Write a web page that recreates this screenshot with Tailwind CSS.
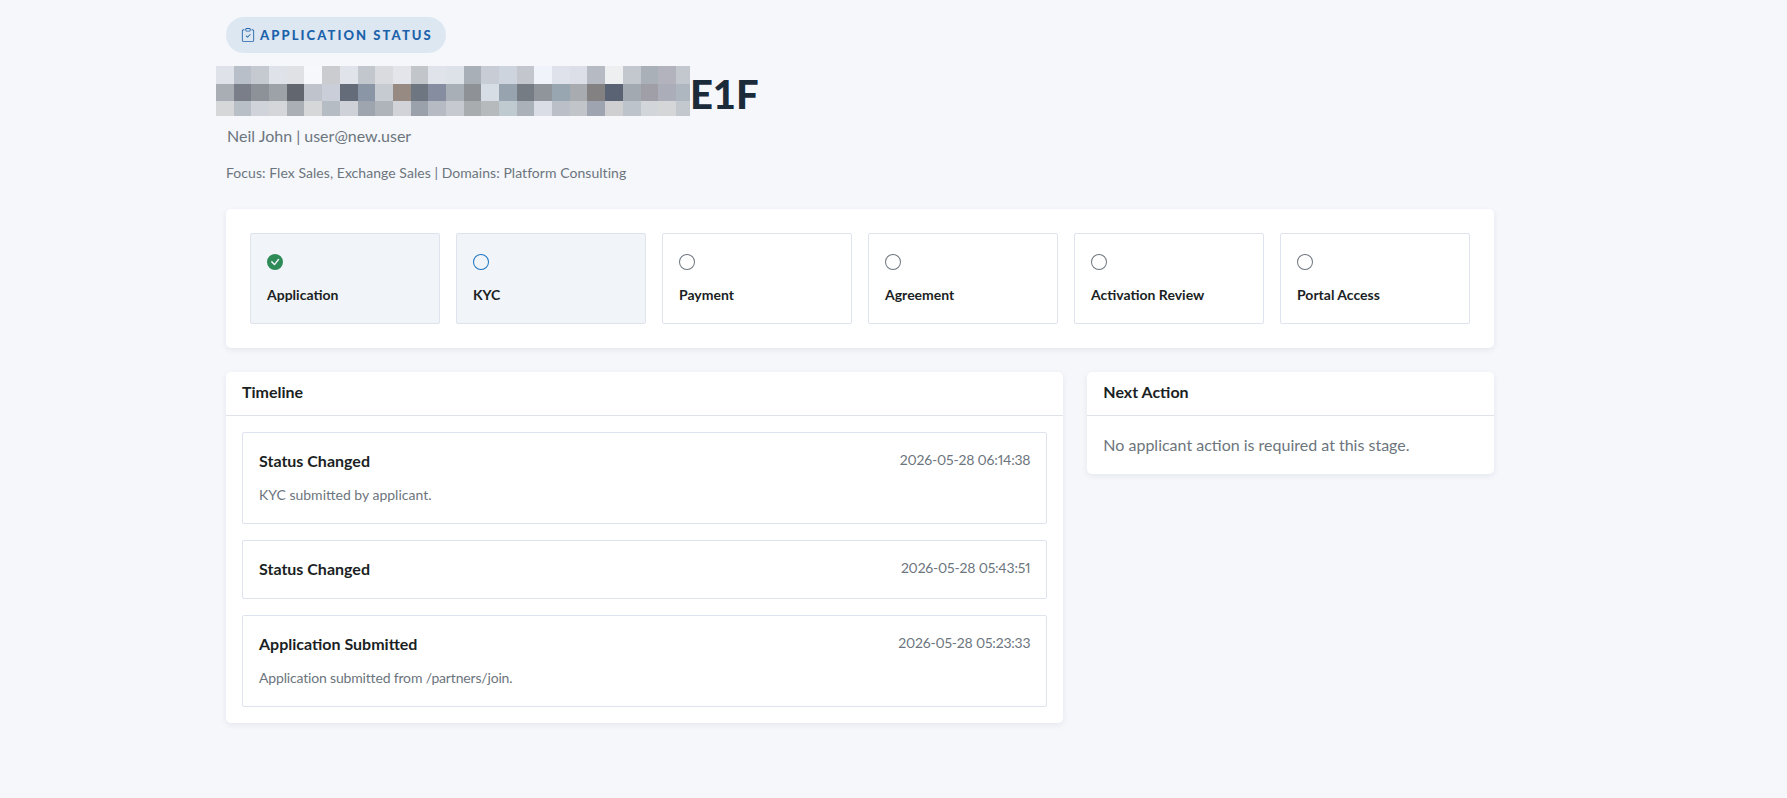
<!DOCTYPE html>
<html lang="en">
<head>
  <meta charset="UTF-8">
  <meta name="viewport" content="width=device-width, initial-scale=1.0">
  <title>Application Status</title>
  <script src="https://cdn.jsdelivr.net/npm/@tailwindcss/browser@4"></script>
</head>
<body class="bg-[#f5f7fb] font-['Lato',sans-serif] text-[#1b1f24]">
  <main class="w-[1268px] ml-[226px] pt-[17px] pb-[60px]">

    <div class="inline-flex items-center gap-[5px] h-9 pl-[15px] pr-[13px] rounded-full bg-[#dde7f2] text-[#1c62aa]">
      <svg class="w-[14px] h-[14px]" viewBox="0 0 16 16" fill="currentColor">
        <path fill-rule="evenodd" d="M10.854 7.146a.5.5 0 0 1 0 .708l-3 3a.5.5 0 0 1-.708 0l-1.5-1.5a.5.5 0 1 1 .708-.708L7.5 9.793l2.646-2.647a.5.5 0 0 1 .708 0z"/>
        <path d="M4 1.5H3a2 2 0 0 0-2 2V14a2 2 0 0 0 2 2h10a2 2 0 0 0 2-2V3.5a2 2 0 0 0-2-2h-1v1h1a1 1 0 0 1 1 1V14a1 1 0 0 1-1 1H3a1 1 0 0 1-1-1V3.5a1 1 0 0 1 1-1h1v-1z"/>
        <path d="M9.5 1a.5.5 0 0 1 .5.5v1a.5.5 0 0 1-.5.5h-3a.5.5 0 0 1-.5-.5v-1a.5.5 0 0 1 .5-.5h3zm-3-1A1.5 1.5 0 0 0 5 1.5v1A1.5 1.5 0 0 0 6.5 4h3A1.5 1.5 0 0 0 11 2.5v-1A1.5 1.5 0 0 0 9.5 0h-3z"/>
      </svg>
      <span class="text-[13px] font-black tracking-[0.16em] leading-none">APPLICATION STATUS</span>
    </div>

    <h1 class="flex h-[50px] mt-[13px] -ml-[10px] text-[40px] font-black text-[#1c2b3a]">
      <!-- blurred out part of the application id -->
      <div class="grid grid-cols-[repeat(26,17.7px)_14px] grid-rows-[18px_17px_15px] shrink-0">
        <i class="bg-[#dfe2e9]"></i><i class="bg-[#b9bfc9]"></i><i class="bg-[#c5c9d0]"></i><i class="bg-[#dfe2e8]"></i><i class="bg-[#dfe1e5]"></i><i class="bg-[#f7f8fb]"></i><i class="bg-[#cbccd0]"></i><i class="bg-[#e0e4ea]"></i><i class="bg-[#c2c7ce]"></i><i class="bg-[#d9dbde]"></i><i class="bg-[#e3e5ea]"></i><i class="bg-[#c2c5c9]"></i><i class="bg-[#e0e3ea]"></i><i class="bg-[#dde1e8]"></i><i class="bg-[#a9afb6]"></i><i class="bg-[#c7ccd5]"></i><i class="bg-[#cdd4de]"></i><i class="bg-[#c3c6cd]"></i><i class="bg-[#f1f3fa]"></i><i class="bg-[#dfe2ea]"></i><i class="bg-[#dcdfe7]"></i><i class="bg-[#b6bac2]"></i><i class="bg-[#eeeff1]"></i><i class="bg-[#c3c8cf]"></i><i class="bg-[#aab0b8]"></i><i class="bg-[#b3b3bd]"></i><i class="bg-[#c3c7ce]"></i>
        <i class="bg-[#a9aeb4]"></i><i class="bg-[#797e88]"></i><i class="bg-[#8d9299]"></i><i class="bg-[#9ca2a8]"></i><i class="bg-[#61666f]"></i><i class="bg-[#bec3cc]"></i><i class="bg-[#c9ced8]"></i><i class="bg-[#656c79]"></i><i class="bg-[#8a96a5]"></i><i class="bg-[#c5cbd0]"></i><i class="bg-[#978a82]"></i><i class="bg-[#6e7781]"></i><i class="bg-[#868da0]"></i><i class="bg-[#a8afb7]"></i><i class="bg-[#8e9196]"></i><i class="bg-[#d7dde5]"></i><i class="bg-[#97a3af]"></i><i class="bg-[#767c84]"></i><i class="bg-[#90959b]"></i><i class="bg-[#98a6b1]"></i><i class="bg-[#a8abaf]"></i><i class="bg-[#838181]"></i><i class="bg-[#5a6373]"></i><i class="bg-[#a3a9b0]"></i><i class="bg-[#a09fa8]"></i><i class="bg-[#abaeb9]"></i><i class="bg-[#aeb6c0]"></i>
        <i class="bg-[#d5d7d9]"></i><i class="bg-[#b9bfc7]"></i><i class="bg-[#d0d3d9]"></i><i class="bg-[#d4d6d9]"></i><i class="bg-[#a9afb5]"></i><i class="bg-[#d6d7d9]"></i><i class="bg-[#b5bcc3]"></i><i class="bg-[#ced1d7]"></i><i class="bg-[#9fa5ae]"></i><i class="bg-[#afb3ba]"></i><i class="bg-[#d1d3d9]"></i><i class="bg-[#9aa1aa]"></i><i class="bg-[#b6bac2]"></i><i class="bg-[#c6cad0]"></i><i class="bg-[#a9acae]"></i><i class="bg-[#b7babc]"></i><i class="bg-[#bfc9d0]"></i><i class="bg-[#aab1b9]"></i><i class="bg-[#dadde5]"></i><i class="bg-[#bbbfc7]"></i><i class="bg-[#c1c4c8]"></i><i class="bg-[#9fa5b0]"></i><i class="bg-[#cfcfd1]"></i><i class="bg-[#bcc3ca]"></i><i class="bg-[#d2d5d9]"></i><i class="bg-[#d5d6d7]"></i><i class="bg-[#c3c8ce]"></i>
      </div>
      <span class="leading-[48px] mt-[4px]">E1F</span>
    </h1>

    <p class="mt-[7px] ml-px text-base/[25.6px] text-[#6c757d]">Neil John | user@new.user</p>
    <p class="mt-[13px] text-sm/[22.4px] tracking-[0.05px] text-[#6c757d]">Focus: Flex Sales, Exchange Sales | Domains: Platform Consulting</p>

    <section class="mt-[25px] p-6 bg-white rounded-[5px] shadow-[0_2px_6px_rgba(30,40,60,0.08)] grid grid-cols-6 gap-4">
      <div class="h-[91px] pt-5 px-4 bg-[#f1f4f9] border border-[#dee3ee] rounded-[2px]">
        <svg class="w-4 h-4 text-[#2e8b57]" viewBox="0 0 16 16" fill="currentColor"><path d="M16 8A8 8 0 1 1 0 8a8 8 0 0 1 16 0zm-3.97-3.03a.75.75 0 0 0-1.08.022L7.477 9.417 5.384 7.323a.75.75 0 0 0-1.06 1.06L6.97 11.03a.75.75 0 0 0 1.079-.02l3.992-4.99a.75.75 0 0 0-.01-1.05z"/></svg>
        <p class="mt-[14px] text-sm/[22.4px] font-bold">Application</p>
      </div>
      <div class="h-[91px] pt-5 px-4 bg-[#f1f4f9] border border-[#dee3ee] rounded-[2px]">
        <svg class="w-4 h-4 text-[#1a73c0]" viewBox="0 0 16 16" fill="currentColor"><path d="M8 15A7 7 0 1 1 8 1a7 7 0 0 1 0 14zm0 1A8 8 0 1 0 8 0a8 8 0 0 0 0 16z"/></svg>
        <p class="mt-[14px] text-sm/[22.4px] font-bold">KYC</p>
      </div>
      <div class="h-[91px] pt-5 px-4 bg-white border border-[#dee3ee] rounded-[2px]">
        <svg class="w-4 h-4 text-[#6c757d]" viewBox="0 0 16 16" fill="currentColor"><path d="M8 15A7 7 0 1 1 8 1a7 7 0 0 1 0 14zm0 1A8 8 0 1 0 8 0a8 8 0 0 0 0 16z"/></svg>
        <p class="mt-[14px] text-sm/[22.4px] font-bold">Payment</p>
      </div>
      <div class="h-[91px] pt-5 px-4 bg-white border border-[#dee3ee] rounded-[2px]">
        <svg class="w-4 h-4 text-[#6c757d]" viewBox="0 0 16 16" fill="currentColor"><path d="M8 15A7 7 0 1 1 8 1a7 7 0 0 1 0 14zm0 1A8 8 0 1 0 8 0a8 8 0 0 0 0 16z"/></svg>
        <p class="mt-[14px] text-sm/[22.4px] font-bold">Agreement</p>
      </div>
      <div class="h-[91px] pt-5 px-4 bg-white border border-[#dee3ee] rounded-[2px]">
        <svg class="w-4 h-4 text-[#6c757d]" viewBox="0 0 16 16" fill="currentColor"><path d="M8 15A7 7 0 1 1 8 1a7 7 0 0 1 0 14zm0 1A8 8 0 1 0 8 0a8 8 0 0 0 0 16z"/></svg>
        <p class="mt-[14px] text-sm/[22.4px] font-bold">Activation Review</p>
      </div>
      <div class="h-[91px] pt-5 px-4 bg-white border border-[#dee3ee] rounded-[2px]">
        <svg class="w-4 h-4 text-[#6c757d]" viewBox="0 0 16 16" fill="currentColor"><path d="M8 15A7 7 0 1 1 8 1a7 7 0 0 1 0 14zm0 1A8 8 0 1 0 8 0a8 8 0 0 0 0 16z"/></svg>
        <p class="mt-[14px] text-sm/[22.4px] font-bold">Portal Access</p>
      </div>
    </section>

    <div class="mt-6 grid grid-cols-3 gap-6 items-start">
      <section class="col-span-2 bg-white rounded-[5px] shadow-[0_2px_6px_rgba(30,40,60,0.08)]">
        <h2 class="h-11 px-4 pb-[3px] flex items-center text-base font-bold border-b border-[#dfe3e8]">Timeline</h2>
        <div class="p-4 flex flex-col gap-4">
          <div class="p-4 border border-[#dee3ee] rounded-[2px]">
            <div class="flex justify-between items-start">
              <h3 class="pb-[2px] text-base/[23.6px] font-bold">Status Changed</h3>
              <span class="text-sm/[22.4px] text-[#6c757d] tracking-[-0.2px] proportional-nums">2026-05-28 06:14:38</span>
            </div>
            <p class="mt-[9.6px] text-sm/[22.4px] text-[#6c757d]">KYC submitted by applicant.</p>
          </div>
          <div class="p-4 border border-[#dee3ee] rounded-[2px]">
            <div class="flex justify-between items-start">
              <h3 class="pb-[2px] text-base/[23.6px] font-bold">Status Changed</h3>
              <span class="text-sm/[22.4px] text-[#6c757d] tracking-[-0.2px] proportional-nums">2026-05-28 05:43:51</span>
            </div>
          </div>
          <div class="p-4 border border-[#dee3ee] rounded-[2px]">
            <div class="flex justify-between items-start">
              <h3 class="pb-[2px] text-base/[23.6px] font-bold">Application Submitted</h3>
              <span class="text-sm/[22.4px] text-[#6c757d] tracking-[-0.2px] proportional-nums">2026-05-28 05:23:33</span>
            </div>
            <p class="mt-[9.6px] text-sm/[22.4px] tracking-[-0.17px] text-[#6c757d]">Application submitted from /partners/join.</p>
          </div>
        </div>
      </section>

      <section class="bg-white rounded-[5px] shadow-[0_2px_6px_rgba(30,40,60,0.08)]">
        <h2 class="h-11 px-4 pb-[3px] flex items-center text-base font-bold border-b border-[#dfe3e8]">Next Action</h2>
        <p class="p-4 text-base/[25.6px] text-[#6c757d]">No applicant action is required at this stage.</p>
      </section>
    </div>
  </main>
</body>
</html>
